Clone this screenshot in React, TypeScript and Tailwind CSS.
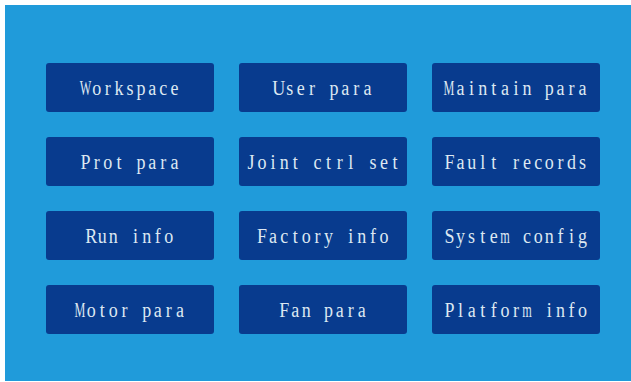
const items = [
  'Workspace',
  'User para',
  'Maintain para',
  'Prot para',
  'Joint ctrl set',
  'Fault records',
  'Run info',
  'Factory info',
  'System config',
  'Motor para',
  'Fan para',
  'Platform info',
];

// wide letters are squeezed into the cell, like the panel's fixed-pitch font
const wide = new Set(['W', 'M', 'm', 'w']);

function MenuButton({ label }: { label: string }) {
  return (
    <button className="flex h-[49px] w-[168px] items-center justify-center rounded-[3px] bg-[#083b8e] text-[#dde8f2]">
      <span className="flex scale-y-[1.2] font-['Liberation_Serif',serif] text-[18px] leading-none">
        {label.split('').map((ch, i) => (
          <span key={i} className="inline-flex w-[11.1px] justify-center whitespace-pre">
            <span className={wide.has(ch) ? 'inline-block scale-x-[0.68]' : 'inline-block'}>{ch}</span>
          </span>
        ))}
      </span>
    </button>
  );
}

export default function App() {
  return (
    <div className="flex h-[382px] w-[631px] flex-col bg-white pt-[5px] pb-px pl-[5px]">
      <div className="flex-1 bg-[#209bda] pt-[58px] pl-[41px]">
        <div className="grid grid-cols-[168px_168px_168px] gap-x-[25px] gap-y-[25px]">
          {items.map((label) => (
            <MenuButton key={label} label={label} />
          ))}
        </div>
      </div>
    </div>
  );
}
